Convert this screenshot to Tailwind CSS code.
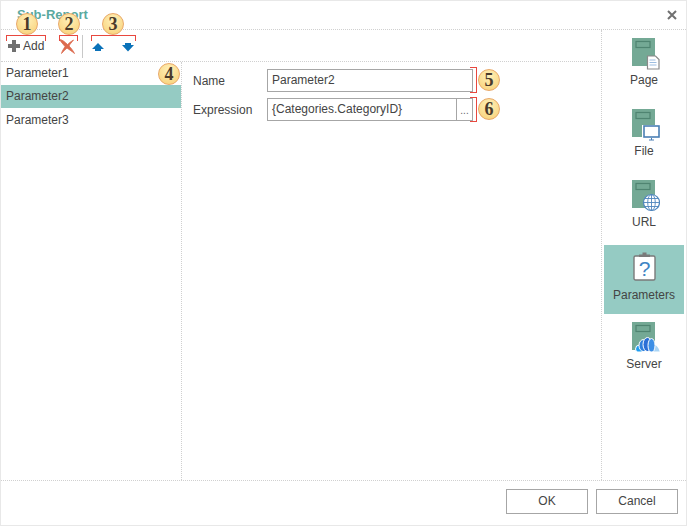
<!DOCTYPE html>
<html><head><meta charset="utf-8"><script src="https://cdn.jsdelivr.net/npm/@tailwindcss/browser@4"></script></head>
<body class="m-0 bg-white">
<div class="relative w-[687px] h-[526px] overflow-hidden bg-white border border-[#e8e8e8] font-['Liberation_Sans',Arial,sans-serif] text-[12px] text-[#444] flex flex-col">
  <!-- title -->
  <div class="h-[29px] flex items-center justify-between border-b border-dotted border-[#d0d0d0] pl-[16px] pr-[9px] shrink-0">
    <span class="text-[13px] font-bold text-[#5aa9a0]">Sub-Report</span>
    <svg width="10" height="10" viewBox="0 0 10 10"><path d="M1 1 L9 9 M9 1 L1 9" stroke="#707070" stroke-width="2"/></svg>
  </div>
  <div class="flex flex-1 min-h-0">
    <div class="flex flex-col w-[601px] shrink-0 border-r border-dotted border-[#d0d0d0]">
      <!-- toolbar -->
      <div class="h-[32px] flex items-center border-b border-dotted border-[#d0d0d0] shrink-0">
        <svg width="12" height="12" viewBox="0 0 12 12" class="ml-[7px] mt-[1px]"><path d="M4 0h4v4h4v4H8v4H4V8H0V4h4z" fill="#707070"/></svg>
        <span class="ml-[3px] text-[12px] mt-[1px]">Add</span>
        <svg width="16" height="15" viewBox="0 0 16 15" class="ml-[15px] mt-[1px]"><path d="M0.500 0.500 C3 0.500 6 3 8.500 5.500 C10 4 12 2.500 14.500 1 C12.500 3.500 11 5 10 7 C12 9 14 11.500 15.500 14.500 C12.500 12 10 10.500 8 9 C6.500 10.500 4 12.500 2.500 14.500 C3 12 5 9.500 6 7.500 C4 5 2 3 0.500 0.500 Z" fill="#dc6a4e" stroke="#dc6a4e" stroke-width="0.800"/></svg>
        <div class="w-px h-[23px] bg-[#c8c8c8] ml-[7px] mt-[1px]"></div>
        <svg width="12" height="9" viewBox="0 0 12 9" class="ml-[9px] mt-[4px]"><path d="M6 0 L12 6 H9 V8 H3 V6 H0 Z" fill="#0b72b9"/></svg>
        <svg width="12" height="9" viewBox="0 0 12 9" class="ml-[18px] mt-[4px]"><path d="M3 0 H9 V2 H12 L6 8.500 L0 2 H3 Z" fill="#0b72b9"/></svg>
      </div>
      <div class="flex flex-1 min-h-0">
        <!-- list -->
        <div class="w-[181px] shrink-0 border-r border-dotted border-[#d0d0d0]">
          <div class="h-[23px] leading-[22px] pl-[5px]">Parameter1</div>
          <div class="h-[23px] leading-[22px] pl-[5px] w-[180px] bg-[#95cbc3]">Parameter2</div>
          <div class="h-[23px] leading-[24px] pl-[5px]">Parameter3</div>
        </div>
        <!-- form -->
        <div class="pl-[11px] pt-[7px] flex flex-col gap-[6px]">
          <div class="flex items-center h-[23px]">
            <span class="w-[74px]">Name</span>
            <div class="w-[206px] h-[23px] border border-[#a6a6a6] pl-[4px] leading-[21px] bg-white">Parameter2</div>
          </div>
          <div class="flex items-center h-[23px]">
            <span class="w-[74px]">Expression</span>
            <div class="w-[206px] h-[23px] border border-[#a6a6a6] bg-white flex">
              <span class="flex-1 pl-[4px] leading-[21px]">{Categories.CategoryID}</span>
              <span class="w-[16px] border-l border-[#a6a6a6] text-center leading-[23px] text-[10px] text-[#666]">...</span>
            </div>
          </div>
        </div>
      </div>
    </div>
    <!-- side nav -->
    <div class="flex-1 flex flex-col pl-[2px] pr-[2px] pt-[8px] text-[12px]">
      <div class="h-[71px] flex flex-col items-center">
        <svg width="28" height="32" viewBox="0 0 28 32" class="ml-[4px]"><rect x="0" y="0" width="23" height="28" fill="#74a995"/><rect x="4" y="3.500" width="14" height="6" fill="none" stroke="#4f8471" stroke-width="1.200"/><path d="M15.500 18h8l3.500 3.500v9.500h-11.500z" fill="#fff" stroke="#8a8a8a" stroke-width="1.200"/><path d="M17.500 22h6M17.500 24.500h7M17.500 27h7" stroke="#9dbde0" stroke-width="1"/></svg>
        <span class="mt-[1px]">Page</span>
      </div>
      <div class="h-[71px] flex flex-col items-center">
        <svg width="28" height="32" viewBox="0 0 28 32" class="ml-[4px]"><rect x="0" y="0" width="23" height="28" fill="#74a995"/><rect x="4" y="3.500" width="14" height="6" fill="none" stroke="#4f8471" stroke-width="1.200"/><rect x="10" y="16" width="18" height="13" fill="#fff" /><rect x="12" y="17" width="15" height="11" fill="#fff" stroke="#4a7fb5" stroke-width="1.600"/><path d="M17 31h5M19.500 29v2" stroke="#4a7fb5" stroke-width="1"/></svg>
        <span class="mt-[1px]">File</span>
      </div>
      <div class="h-[65px] flex flex-col items-center">
        <svg width="28" height="32" viewBox="0 0 28 32" class="ml-[4px]"><rect x="0" y="0" width="23" height="28" fill="#74a995"/><rect x="4" y="3.500" width="14" height="6" fill="none" stroke="#4f8471" stroke-width="1.200"/><circle cx="19.500" cy="22.500" r="8" fill="#fff" stroke="#4f86bd" stroke-width="1.200"/><path d="M11.500 22.500h16M12.800 18.500h13.400M12.800 26.500h13.400M19.500 14.500v16" stroke="#4f86bd" stroke-width=".9"/><ellipse cx="19.500" cy="22.500" rx="3.800" ry="8" fill="none" stroke="#4f86bd" stroke-width=".9"/></svg>
        <span class="mt-[1px]">URL</span>
      </div>
      <div class="h-[69px] bg-[#95cbc3] flex flex-col items-center pt-[7px]">
        <svg width="23" height="29" viewBox="0 0 23 29"><rect x="1" y="4" width="21" height="24" rx="1.500" fill="#fff" stroke="#7a7a7a" stroke-width="1.400"/><path d="M6 5V2.500h3.500V0.500h4V2.500H17V5z" fill="#7a7a7a"/><text x="11.500" y="24" text-anchor="middle" font-size="21" font-family="Liberation Sans" fill="#3f84c4">?</text></svg>
        <span class="mt-[5px]">Parameters</span>
      </div>
      <div class="h-[60px] flex flex-col items-center pt-[8px]">
        <svg width="28" height="32" viewBox="0 0 28 32" class="ml-[4px]"><rect x="0" y="0" width="23" height="28" fill="#74a995"/><rect x="4" y="3.500" width="14" height="6" fill="none" stroke="#4f8471" stroke-width="1.200"/><path d="M21 31 V23 C24 22 27 26 28 31 Z" fill="#a9d4f5"/><circle cx="7.500" cy="27" r="4" fill="#1f9df0" stroke="#fff" stroke-width="1"/><ellipse cx="11.500" cy="23.500" rx="4.500" ry="6" fill="#2f80dd" stroke="#fff" stroke-width="1"/><ellipse cx="15.500" cy="22.500" rx="4.500" ry="7" fill="#2b6fd6" stroke="#fff" stroke-width="1"/><ellipse cx="19.500" cy="23.500" rx="3.500" ry="7" fill="#3d8fe6" stroke="#fff" stroke-width="1"/><rect x="3" y="29.500" width="25" height="2.500" fill="#fff"/></svg>
        <span class="mt-[1px]">Server</span>
      </div>
    </div>
  </div>
  <!-- footer -->
  <div class="h-[45px] shrink-0 border-t border-dotted border-[#d0d0d0] flex items-start justify-end gap-[8px] pt-[8px] pr-[8px]">
    <div class="w-[82px] h-[25px] border border-[#a6a6a6] text-center leading-[23px]">OK</div>
    <div class="w-[82px] h-[25px] border border-[#a6a6a6] text-center leading-[23px]">Cancel</div>
  </div>

  <!-- annotation brackets -->
  <div class="absolute left-[5px] top-[34px] w-[40px] h-[6px] border border-b-0 border-[#e8483f]"></div>
  <div class="absolute left-[58px] top-[34px] w-[19px] h-[6px] border border-b-0 border-[#e8483f]"></div>
  <div class="absolute left-[90px] top-[34px] w-[45px] h-[6px] border border-b-0 border-[#e8483f]"></div>
  <div class="absolute left-[469px] top-[66px] w-[7px] h-[26px] border border-l-0 border-[#e8483f]"></div>
  <div class="absolute left-[469px] top-[96px] w-[7px] h-[25px] border border-l-0 border-[#e8483f]"></div>
  <!-- badges -->
  <div class="absolute left-[15px] top-[12px] w-[22px] h-[22px] rounded-full border border-[#e9a868] bg-[radial-gradient(circle_at_50%_30%,#fff0b8,#f7cf75)] text-center font-['Liberation_Serif',serif] font-bold text-[18px] leading-[20px] text-[#4a3a2a]">1</div>
  <div class="absolute left-[57px] top-[12px] w-[22px] h-[22px] rounded-full border border-[#e9a868] bg-[radial-gradient(circle_at_50%_30%,#fff0b8,#f7cf75)] text-center font-['Liberation_Serif',serif] font-bold text-[18px] leading-[20px] text-[#4a3a2a]">2</div>
  <div class="absolute left-[101px] top-[12px] w-[22px] h-[22px] rounded-full border border-[#e9a868] bg-[radial-gradient(circle_at_50%_30%,#fff0b8,#f7cf75)] text-center font-['Liberation_Serif',serif] font-bold text-[18px] leading-[20px] text-[#4a3a2a]">3</div>
  <div class="absolute left-[157px] top-[62px] w-[22px] h-[22px] rounded-full border border-[#e9a868] bg-[radial-gradient(circle_at_50%_30%,#fff0b8,#f7cf75)] text-center font-['Liberation_Serif',serif] font-bold text-[18px] leading-[20px] text-[#4a3a2a]">4</div>
  <div class="absolute left-[477px] top-[68px] w-[22px] h-[22px] rounded-full border border-[#e9a868] bg-[radial-gradient(circle_at_50%_30%,#fff0b8,#f7cf75)] text-center font-['Liberation_Serif',serif] font-bold text-[18px] leading-[20px] text-[#4a3a2a]">5</div>
  <div class="absolute left-[477px] top-[97px] w-[22px] h-[22px] rounded-full border border-[#e9a868] bg-[radial-gradient(circle_at_50%_30%,#fff0b8,#f7cf75)] text-center font-['Liberation_Serif',serif] font-bold text-[18px] leading-[20px] text-[#4a3a2a]">6</div>
</div>
</body></html>
